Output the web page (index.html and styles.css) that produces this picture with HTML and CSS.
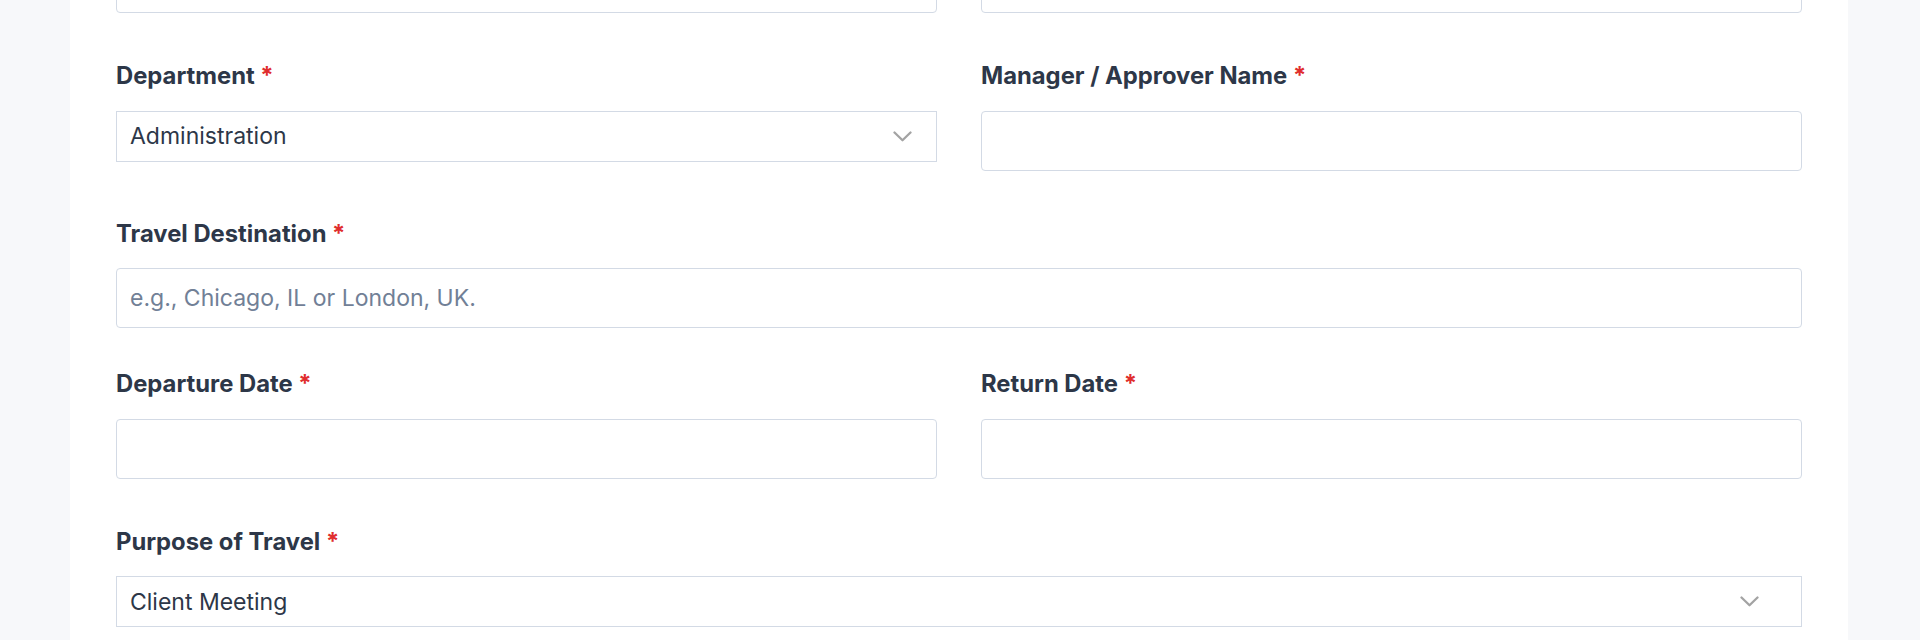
FILE: index.html
```html
<!DOCTYPE html>
<html lang="en">
<head>
<meta charset="utf-8">
<title>Travel Request</title>
<link rel="stylesheet" href="styles.css">
</head>
<body>
<main class="card">
  <form class="form">
    <div class="row two top-row">
      <div class="field"><input class="input" type="text"></div>
      <div class="field"><input class="input" type="text"></div>
    </div>

    <div class="row two">
      <div class="field">
        <label class="label">Department <span class="req">*</span></label>
        <div class="select-wrap">
          <select class="select">
            <option>Administration</option>
            <option>Finance</option>
            <option>Sales</option>
          </select>
          <svg class="chev" width="19" height="11" viewBox="0 0 19 11" aria-hidden="true"><path d="M1.5 1.5 L9.5 9.3 L17.5 1.5" fill="none" stroke="#a3a3a3" stroke-width="2.3" stroke-linecap="round" stroke-linejoin="round"/></svg>
        </div>
      </div>
      <div class="field">
        <label class="label">Manager / Approver Name <span class="req">*</span></label>
        <input class="input" type="text">
      </div>
    </div>

    <div class="row one">
      <div class="field">
        <label class="label">Travel Destination <span class="req">*</span></label>
        <input class="input" type="text" placeholder="e.g., Chicago, IL or London, UK.">
      </div>
    </div>

    <div class="row two">
      <div class="field">
        <label class="label">Departure Date <span class="req">*</span></label>
        <input class="input" type="text">
      </div>
      <div class="field">
        <label class="label">Return Date <span class="req">*</span></label>
        <input class="input" type="text">
      </div>
    </div>

    <div class="row one">
      <div class="field">
        <label class="label">Purpose of Travel <span class="req">*</span></label>
        <div class="select-wrap">
          <select class="select">
            <option>Client Meeting</option>
            <option>Conference</option>
            <option>Training</option>
          </select>
          <svg class="chev" width="19" height="11" viewBox="0 0 19 11" aria-hidden="true"><path d="M1.5 1.5 L9.5 9.3 L17.5 1.5" fill="none" stroke="#a3a3a3" stroke-width="2.3" stroke-linecap="round" stroke-linejoin="round"/></svg>
        </div>
      </div>
    </div>
  </form>
</main>
</body>
</html>
```

FILE: styles.css
```css
* { box-sizing: border-box; }

html, body {
  margin: 0;
  padding: 0;
  background: #f7f8fa;
  font-family: Inter, "Noto Sans", "Liberation Sans", sans-serif;
  color: #2d3748;
  overflow: hidden;
}

.card {
  margin: -47px 0 0 70px;
  width: 1778px;
  min-height: 720px;
  background: #ffffff;
  padding: 0 46px;
}

.form {
  display: flex;
  flex-direction: column;
}

.row {
  display: grid;
  column-gap: 44px;
  align-items: start;
}

.row.two { grid-template-columns: 1fr 1fr; margin-bottom: 49px; }
.row.one { grid-template-columns: 1fr; margin-bottom: 42px; }

.field {
  display: flex;
  flex-direction: column;
  min-width: 0;
}

.label {
  display: block;
  font-size: 23.8px;
  line-height: 28px;
  font-weight: 700;
  color: #2d3748;
  margin-bottom: 20.5px;
}

.req {
  color: #e02d2d;
}

.input {
  display: block;
  width: 100%;
  height: 60px;
  border: 1px solid #d3dae5;
  border-radius: 4px;
  background: #ffffff;
  padding: 0 13px;
  font-family: inherit;
  font-size: 23px;
  color: #2d3748;
  outline: none;
}

.input::placeholder {
  color: #718096;
  opacity: 1;
}

.select-wrap {
  position: relative;
}

.select {
  display: block;
  width: 100%;
  height: 51px;
  border: 1px solid #d3dae5;
  border-radius: 0;
  background: #ffffff;
  padding: 0 60px 0 13px;
  font-family: inherit;
  font-size: 23px;
  color: #2d3748;
  appearance: none;
  -webkit-appearance: none;
  outline: none;
}

.chev {
  position: absolute;
  top: 20px;
  right: calc(2% + 9px);
  pointer-events: none;
}
```
